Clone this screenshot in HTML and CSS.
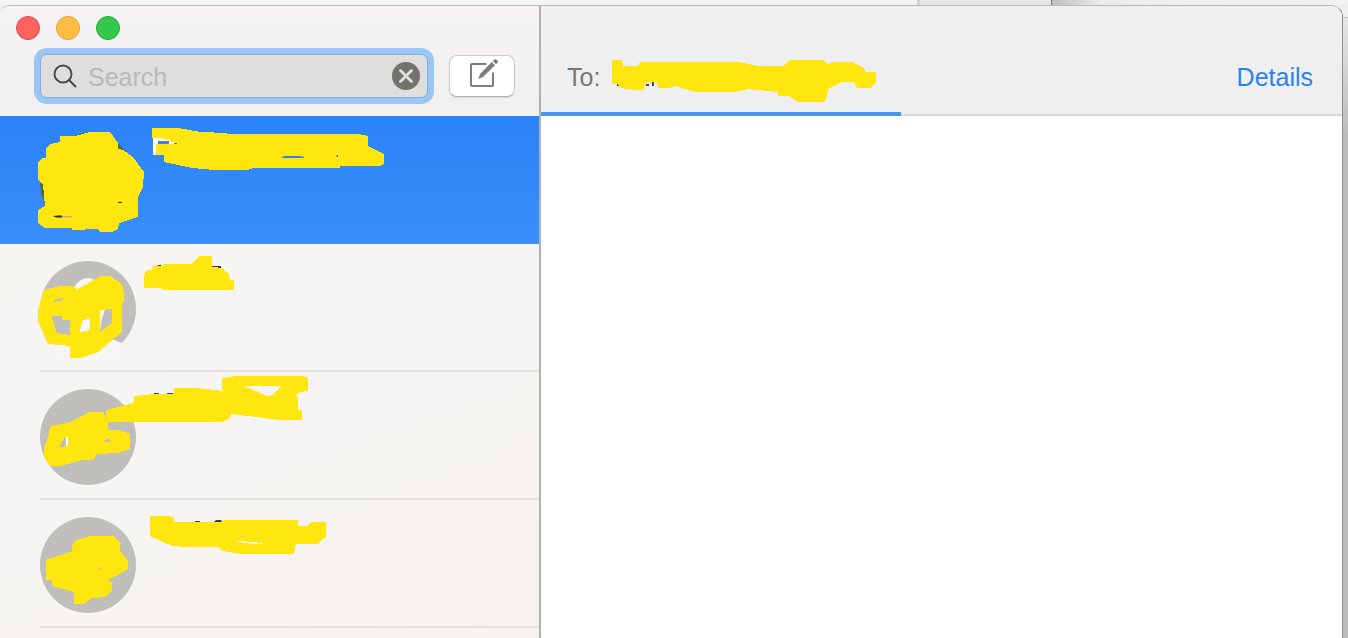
FILE: index.html
```html
<!DOCTYPE html>
<html lang="en">

<head>
    <meta charset="UTF-8">
    <meta name="viewport" content="width=device-width, initial-scale=1.0">
    <title>Messages</title>
    <link rel="stylesheet" href="styles.css">
</head>

<body>
    <div class="backdrop">
        <div class="backdrop-pane"></div>
        <div class="backdrop-tab"></div>
        <div class="backdrop-rest"></div>
    </div>
    <div class="desktop">
        <div class="window">
            <aside class="sidebar">
                <header class="sidebar-header">
                    <div class="lights">
                        <button class="light red" aria-label="Close"></button>
                        <button class="light yellow" aria-label="Minimize"></button>
                        <button class="light green" aria-label="Zoom"></button>
                    </div>
                    <div class="toolbar">
                        <div class="search">
                            <svg class="search-icon" width="24" height="24" viewBox="0 0 24 24" fill="none" stroke="#4a4a4a" stroke-width="2">
                                <circle cx="10" cy="10" r="8.5" />
                                <path d="M16 16l7 7" />
                            </svg>
                            <input type="text" placeholder="Search" aria-label="Search">
                            <button class="clear" aria-label="Clear search">
                                <svg width="28" height="28" viewBox="0 0 28 28">
                                    <circle cx="14" cy="14" r="14" fill="#73726f" />
                                    <path d="M8.5 8.5l11 11M19.5 8.5l-11 11" stroke="#e2e1df" stroke-width="2.8" stroke-linecap="round" />
                                </svg>
                            </button>
                        </div>
                        <button class="compose" aria-label="New message">
                            <svg width="32" height="30" viewBox="0 0 32 30">
                                <path d="M20.500 5H6Q5 5 5 6V26Q5 27 6 27H26Q27 27 27 26V13.500" fill="none" stroke="#7d7d7d" stroke-width="2" />
                                <path d="M12.300 20L14 15L25.700 3L29 6.300L17 18Z" fill="#7d7d7d" />
                                <path d="M26.800 2L28.600 0.400Q29.600 -0.200 30.400 0.600L31.500 1.700Q32.200 2.600 31.500 3.400L30 5.200Z" fill="#7d7d7d" />
                            </svg>
                        </button>
                    </div>
                </header>
                <ul class="conversations">
                    <li class="conversation selected">
                        <svg class="marks" viewBox="0 116 400 128">
                            <path fill="#506b4b" d="M74 136L83 133L90 132L80 138ZM118 143L129 155L118 153ZM40 183L44 184L46 206L41 194Z" />
                            <path class="ink" d="M60 136H75L90 132H110L118 143V149L123 150L133 157L144 172L143 187L138 197V217L119 223L118 229L112 232H100L97 229L72 230V228H45L38 223V210L45 206L43 184L38 180V163L42 158H46V148L51 144L60 142Z" />
                            <path fill="#243420" d="M53 216L58 215.500H62V217.500H56ZM118 202H122V203H118Z" />
                            <path fill="#c9a98a" d="M62 216H72V217.500H62Z" />
                            <path fill="#fff" d="M153 138H178V144H156V155H153Z" />
                            <path fill="#3c7fdf" d="M158 141H169V144H158ZM174 141H177V144H174Z" />
                            <path class="ink" d="M152 128H178L201 132L227 133V134H359L368 136V146L384 154V164L380 166H340V168H254L247 170H214L192 168L164 162V155H156V144H178L162 138H152Z" />
                            <path fill="#3c82dc" d="M282 157L285 156H300L304 157V158H282ZM336 155H338V157H337Z" />
                        </svg>
                    </li>
                    <li class="conversation">
                        <svg class="marks" viewBox="0 244 400 128">
                            <circle class="avatar" cx="88" cy="309" r="48" />
                            <ellipse cx="88" cy="300" rx="17" ry="22" fill="#f7f6f4" />
                            <path fill="#f7f6f4" d="M80 316H97V332L112 339L122 343L116 360H60L52 344L80 332ZM100 310H105L102 318L100 332Z" />
                            <path class="ink" fill-rule="evenodd" d="M44 290L60 286H75L76 290L101 276H110L122 284L124 292V302L122 303V332L98 352L81 358H70V346L48 344L38 321V310ZM53 301L60 298H63V300L54 302ZM51 316H62V320H70V335L57 333ZM82 321L90 318V330L80 332ZM100 310L112 309V323L100 332Z" />
                            <path fill="#3b3f4b" d="M156 265H161V266H156ZM211 266H221V268H211Z" />
                            <path class="ink" d="M146 270H152L153 266L162 264L156 266H162L165 264H192L199 256H212V267L223 268L229 275L230 280H234V290H162V288H144V277Z" />
                        </svg>
                    </li>
                    <li class="conversation">
                        <svg class="marks" viewBox="0 372 400 128">
                            <circle class="avatar" cx="88" cy="437" r="48" />
                            <path fill="#fff" d="M66 437H68V447H66Z" />
                            <path class="ink" fill-rule="evenodd" d="M50 426L68 423L90 412H104L105 417H108V430H118L130 434V449L117 453L97 454L93 460H83L60 466H50L44 457V448L48 438ZM59 447L64 438L68 437V446ZM104 440L108 439L111 442H105Z" />
                            <path fill="#3f444b" d="M154 393H159V395H154ZM167 393H173V395H167Z" />
                            <path class="ink" fill-rule="evenodd" d="M106 410L134 403V396L154 394H174V388H198L223 391L222 389V378L237 376H302L308 378V390L296 394L298 398V410H302V420H280L231 414L229 419L222 422H108L106 420ZM244 386H281L272 395L267 396Z" />
                        </svg>
                    </li>
                    <li class="conversation">
                        <svg class="marks" viewBox="0 500 400 128">
                            <circle class="avatar" cx="88" cy="565" r="48" />
                            <path class="ink" fill-rule="evenodd" d="M46 560L66 553L72 551V546L76 540L90 536H113L120 542V550L128 561V569L107 581L112 582V591L105 597L92 598L84 604H74V592L52 586V580H46ZM98 569L100 567H102L99 570Z" />
                            <path fill="#3b3f4b" d="M195 521H200V523H195ZM214 522L216 520H221L222 522Z" />
                            <path class="ink" fill-rule="evenodd" d="M150 516H168L174 518V522H222V520H298V526H308L311 522H326V538L322 539L317 544H296L294 554H241L223 551L218 547H188L172 546L150 536ZM233 541L240 541L262 543V544H252L240 542Z" />
                        </svg>
                    </li>
                </ul>
            </aside>
            <main class="chat">
                <header class="chat-header">
                    <span class="to">To:</span>
                    <svg class="recipient" width="264" height="42" viewBox="612 60 264 42">
                        <path fill="#4c4c4c" d="M617 84H619V86H617ZM646 84H649V86H646ZM652 82H654V86H652ZM674 85H677V86H674Z" />
                        <path class="ink" d="M612 60H622L623 66H638L640 62H738L759 66H783L789 60H823L828 64L835 62H852L864 68L865 72H876V82L870 88H857L854 82H842L828 89L826 100L823 102H798L789 96H778V92L748 89L735 92H695L675 86L670 88H658L657 82H647L643 90H634L620 88L618 84H612Z" />
                    </svg>
                    <a class="details" href="#">Details</a>
                    <div class="progress"></div>
                </header>
            </main>
        </div>
        <div class="backdrop-side"></div>
    </div>
</body>

</html>
```
FILE: styles.css
```css
* {
    box-sizing: border-box;
}

body {
    margin: 0;
    height: 100vh;
    display: flex;
    flex-direction: column;
    overflow: hidden;
    background: #f4f4f4;
    font-family: "Liberation Sans", Arial, sans-serif;
    font-size: 25px;
}

button {
    padding: 0;
    border: none;
    cursor: pointer;
}

svg {
    display: block;
}

/* Windows behind this one */
.backdrop {
    display: flex;
    height: 5px;
}

.backdrop-pane {
    width: 68%;
    background: #f4f4f4;
}

.backdrop-tab {
    width: 10%;
    border-left: 3px solid #d4d4d4;
    background: #e6e6e6;
}

.backdrop-rest {
    flex: 1;
    border-left: 1px solid #777;
    background: linear-gradient(to right, #bcbcbc, #ececec 50px, #f1f1f1);
}

.backdrop-side {
    width: 5px;
    border-top: 12px solid #efefef;
    background: linear-gradient(#c0c0c0 1px, #e6e6e6 1px, #bbb 120px);
}

.desktop {
    flex: 1;
    display: flex;
    min-height: 0;
    background: #efefef;
}

.window {
    flex: 1;
    display: flex;
    overflow: hidden;
    border-top: 1px solid #b9b9b9;
    border-right: 1px solid #919191;
    border-radius: 10px 12px 0 0;
    background: #fff;
}

/* Sidebar */
.sidebar {
    width: 541px;
    flex-shrink: 0;
    border-right: 2px solid #b1b0b1;
    background: linear-gradient(160deg, #f8f5f1, #f6f5f3 50%, #f6f2ef);
}

.sidebar-header {
    padding: 10px 24px 18px 40px;
    background: linear-gradient(#f4f2f3, #f2f0ef);
}

.lights {
    display: flex;
    gap: 16px;
    margin-left: -24px;
}

.light {
    width: 24px;
    height: 24px;
    border-radius: 50%;
}

.red {
    background: #fd625d;
    border: 1px solid #df4c49;
}

.yellow {
    background: #fdbd41;
    border: 1px solid #dea03a;
}

.green {
    background: #34c84a;
    border: 1px solid #27aa35;
}

.toolbar {
    display: flex;
    align-items: center;
    gap: 21px;
    margin-top: 14px;
}

.search {
    flex: 1;
    display: flex;
    align-items: center;
    min-width: 0;
    height: 44px;
    padding: 0 7px 0 12px;
    border: 1px solid #7fade0;
    border-radius: 7px;
    background: #dfdedc;
    box-shadow: 0 0 0 6px #99c6f3;
}

.search-icon {
    flex-shrink: 0;
}

.search input {
    flex: 1;
    min-width: 0;
    height: 100%;
    padding: 3px 0 0;
    margin-left: 11px;
    border: none;
    outline: none;
    background: none;
    font: inherit;
}

.search input::placeholder {
    color: #b9b8b6;
}

.clear {
    border-radius: 50%;
    background: none;
}

.compose {
    display: flex;
    justify-content: center;
    width: 66px;
    height: 42px;
    padding-top: 3px;
    border: 1px solid #cac9c9;
    border-bottom-color: #b5b4b4;
    border-radius: 8px;
    background: #fff;
    box-shadow: 0 1px 1px #dad9d9;
}

.conversations {
    margin: 0;
    padding: 0;
    list-style: none;
}

.conversation {
    height: 128px;
    background: linear-gradient(#e4e2e0, #e4e2e0) 40px 100% / 100% 2px no-repeat;
}

.selected {
    background: linear-gradient(#2a83f7, #3a8efb);
}

.marks {
    width: 400px;
    height: 128px;
}

.avatar {
    fill: #bfbebb;
}

.ink {
    fill: #ffe60f;
    shape-rendering: crispEdges;
}

/* Chat */
.chat {
    flex: 1;
    min-width: 0;
}

.chat-header {
    position: relative;
    display: flex;
    align-items: flex-start;
    height: 110px;
    padding: 54px 29px 0 26px;
    border-bottom: 2px solid #d8d8d8;
    background: #efefef;
    line-height: 34px;
}

.to {
    width: 45px;
    color: #777;
}

.recipient {
    flex-shrink: 0;
}

.details {
    margin-left: auto;
    color: #2a82ee;
    text-decoration: none;
}

.progress {
    position: absolute;
    left: 0;
    bottom: -2px;
    width: 45%;
    height: 4px;
    background: #419aea;
}
```
